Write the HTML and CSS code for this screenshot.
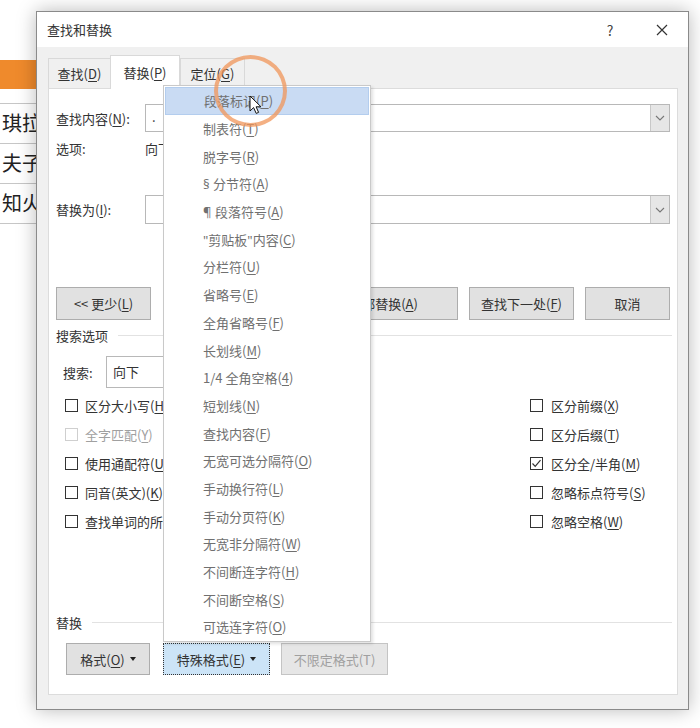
FILE: index.html
```html
<!DOCTYPE html>
<html lang="zh-CN">
<head>
    <meta charset="UTF-8">
    <title>查找和替换</title>
    <link rel="stylesheet" href="styles.css">
</head>
<body>
    <div class="doc">
        <div class="doc-bar"></div>
        <div class="doc-table">
            <div class="doc-row">琪拉</div>
            <div class="doc-row">夫子</div>
            <div class="doc-row">知火</div>
        </div>
    </div>

    <div class="dialog">
        <div class="titlebar">
            <span class="title">查找和替换</span>
            <span class="help">?</span>
            <svg class="close" width="12" height="12" viewBox="0 0 12 12">
                <path d="M1 1 L11 11 M11 1 L1 11" stroke="#333" stroke-width="1.2"/>
            </svg>
        </div>
        <div class="main">
            <div class="tabs">
                <div class="tab tab-find">查找(<u>D</u>)</div>
                <div class="tab tab-replace active">替换(<u>P</u>)</div>
                <div class="tab tab-goto">定位(<u>G</u>)</div>
            </div>
            <div class="panel">
                <div class="field-row find-row">
                    <span class="label">查找内容(<u>N</u>):</span>
                    <div class="combo">
                        <span class="combo-text">.</span>
                        <span class="combo-btn">
                            <svg width="10" height="6" viewBox="0 0 10 6"><polyline points="1,1 5,5 9,1" fill="none" stroke="#777" stroke-width="1.1"/></svg>
                        </span>
                    </div>
                </div>
                <div class="field-row opt-row">
                    <span class="label">选项:</span>
                    <span>向下, 区分全/半角</span>
                </div>
                <div class="field-row replace-row">
                    <span class="label">替换为(<u>I</u>):</span>
                    <div class="combo">
                        <span class="combo-text"></span>
                        <span class="combo-btn">
                            <svg width="10" height="6" viewBox="0 0 10 6"><polyline points="1,1 5,5 9,1" fill="none" stroke="#777" stroke-width="1.1"/></svg>
                        </span>
                    </div>
                </div>

                <div class="btn-row">
                    <div class="btn btn-less">&lt;&lt; 更少(<u>L</u>)</div>
                    <div class="btn-group">
                        <div class="btn btn-mid">替换(<u>R</u>)</div>
                        <div class="btn btn-all">全部替换(<u>A</u>)</div>
                        <div class="btn btn-wide">查找下一处(<u>F</u>)</div>
                        <div class="btn btn-cancel">取消</div>
                    </div>
                </div>

                <div class="group-title search-title">搜索选项</div>
                <div class="search-row">
                    <span class="search-label">搜索:</span>
                    <div class="select">向下</div>
                </div>

                <div class="checks">
                    <div class="check left"><span class="box"></span><span>区分大小写(<u>H</u>)</span></div>
                    <div class="check"><span class="box"></span><span>区分前缀(<u>X</u>)</span></div>
                    <div class="check left disabled"><span class="box"></span><span>全字匹配(<u>Y</u>)</span></div>
                    <div class="check"><span class="box"></span><span>区分后缀(<u>T</u>)</span></div>
                    <div class="check left"><span class="box"></span><span>使用通配符(<u>U</u>)</span></div>
                    <div class="check">
                        <span class="box">
                            <svg width="11" height="11" viewBox="0 0 11 11"><polyline points="1.5,5.5 4.2,8.3 9.5,2.2" fill="none" stroke="#333" stroke-width="1.2"/></svg>
                        </span><span>区分全/半角(<u>M</u>)</span>
                    </div>
                    <div class="check left"><span class="box"></span><span>同音(英文)(<u>K</u>)</span></div>
                    <div class="check"><span class="box"></span><span>忽略标点符号(<u>S</u>)</span></div>
                    <div class="check left"><span class="box"></span><span>查找单词的所有形式(英文)(<u>W</u>)</span></div>
                    <div class="check"><span class="box"></span><span>忽略空格(<u>W</u>)</span></div>
                </div>

                <div class="group-title replace-title">替换</div>
                <div class="bottom-btns">
                    <div class="btn btn-format">格式(<u>O</u>) <i class="caret"></i></div>
                    <div class="btn btn-special focused">特殊格式(<u>E</u>) <i class="caret"></i></div>
                    <div class="btn btn-noformat disabled">不限定格式(T)</div>
                </div>
            </div>
        </div>
    </div>

    <div class="menu">
        <div class="menu-item hover"><span>段落标记(<u>P</u>)</span></div>
        <div class="menu-item"><span>制表符(<u>T</u>)</span></div>
        <div class="menu-item"><span>脱字号(<u>R</u>)</span></div>
        <div class="menu-item"><span><span class="latin">§ </span>分节符(<u>A</u>)</span></div>
        <div class="menu-item"><span><span class="latin">¶ </span>段落符号(<u>A</u>)</span></div>
        <div class="menu-item"><span><span class="latin">"</span>剪贴板<span class="latin">"</span>内容(<u>C</u>)</span></div>
        <div class="menu-item"><span>分栏符(<u>U</u>)</span></div>
        <div class="menu-item"><span>省略号(<u>E</u>)</span></div>
        <div class="menu-item"><span>全角省略号(<u>F</u>)</span></div>
        <div class="menu-item"><span>长划线(<u>M</u>)</span></div>
        <div class="menu-item"><span>1/4 全角空格(<u>4</u>)</span></div>
        <div class="menu-item"><span>短划线(<u>N</u>)</span></div>
        <div class="menu-item"><span>查找内容(<u>F</u>)</span></div>
        <div class="menu-item"><span>无宽可选分隔符(<u>O</u>)</span></div>
        <div class="menu-item"><span>手动换行符(<u>L</u>)</span></div>
        <div class="menu-item"><span>手动分页符(<u>K</u>)</span></div>
        <div class="menu-item"><span>无宽非分隔符(<u>W</u>)</span></div>
        <div class="menu-item"><span>不间断连字符(<u>H</u>)</span></div>
        <div class="menu-item"><span>不间断空格(<u>S</u>)</span></div>
        <div class="menu-item"><span>可选连字符(<u>O</u>)</span></div>
    </div>

    <div class="click-ring"></div>
    <svg class="cursor" width="14" height="20" viewBox="0 0 14 20">
        <path d="M1 1 L1 16 L4.6 12.6 L7.2 18.4 L9.6 17.4 L7.1 11.8 L12 11.8 Z" fill="#fff" stroke="#111" stroke-width="1" stroke-linejoin="round"/>
    </svg>
</body>
</html>
```

FILE: styles.css
```css
* {
    box-sizing: border-box;
}
body {
    margin: 0;
    width: 700px;
    height: 728px;
    overflow: hidden;
    position: relative;
    background: #fff;
    font-family: "Noto Sans CJK SC", "Noto Sans", sans-serif;
    font-size: 13px;
    color: #333;
}
u {
    text-decoration-thickness: 1px;
    text-underline-offset: 2px;
}
.latin {
    font-family: "Noto Sans", sans-serif;
}

/* document behind the dialog */
.doc {
    padding-top: 60px;
    width: 120px;
}
.doc-bar {
    height: 29px;
    background: #ef8a2c;
}
.doc-table {
    margin-top: 14px;
    border-top: 1px solid #c6c6c6;
}
.doc-row {
    height: 40px;
    border-bottom: 1px solid #c6c6c6;
    font-size: 20px;
    line-height: 38px;
    padding-left: 2px;
    color: #222;
}

/* dialog window */
.dialog {
    position: absolute;
    left: 36px;
    top: 11px;
    width: 653px;
    height: 699px;
    border: 1px solid #8a8a8a;
    background: #f0f0f0;
    box-shadow: 0 0 18px rgba(0, 0, 0, 0.28);
    display: flex;
    flex-direction: column;
}
.titlebar {
    height: 35px;
    background: #fff;
    display: flex;
    align-items: center;
    padding-left: 10px;
}
.title {
    color: #333;
}
.help {
    margin-left: auto;
    width: 10px;
    margin-right: 41px;
    text-align: center;
    font-size: 14px;
    color: #444;
}
.close {
    margin-right: 20px;
}
.main {
    flex: 1;
    padding: 8px 10px 14px 11px;
    display: flex;
    flex-direction: column;
}
.tabs {
    height: 33px;
    display: flex;
    align-items: flex-end;
}
.tab {
    height: 30px;
    display: flex;
    align-items: center;
    justify-content: center;
    border: 1px solid #d9d9d9;
    border-bottom: none;
    border-right: none;
    background: #f0f0f0;
}
.tab-find { width: 62px; }
.tab-replace { width: 70px; }
.tab-goto { width: 65px; border-right: 1px solid #d9d9d9; }
.tab.active {
    height: 34px;
    margin-bottom: -1px;
    background: #fff;
    border-right: 1px solid #d9d9d9;
    position: relative;
}
.panel {
    height: 607px;
    background: #fff;
    border: 1px solid #dcdcdc;
    padding: 0 7px 0 7px;
    display: flex;
    flex-direction: column;
}

.field-row {
    display: flex;
    align-items: center;
}
.label {
    width: 89px;
    flex-shrink: 0;
}
.find-row {
    margin-top: 15px;
    height: 28px;
}
.opt-row {
    margin-top: 6px;
    height: 20px;
}
.replace-row {
    margin-top: 37px;
    height: 29px;
}
.combo {
    flex: 1;
    height: 100%;
    border: 1px solid #b8b8b8;
    display: flex;
}
.combo-text {
    flex: 1;
    padding-left: 6px;
    line-height: 24px;
}
.combo-btn {
    width: 19px;
    background: #e6e6e6;
    border-left: 1px solid #c8c8c8;
    display: flex;
    align-items: center;
    justify-content: center;
}

.btn {
    height: 33px;
    border: 1px solid #adadad;
    background: #e1e1e1;
    display: flex;
    align-items: center;
    justify-content: center;
    color: #333;
}
.btn-row {
    margin-top: 63px;
    display: flex;
}
.btn-less { width: 95px; }
.btn-group {
    margin-left: auto;
    display: flex;
    gap: 11px;
}
.btn-mid { width: 95px; }
.btn-all { width: 149px; }
.btn-wide { width: 105px; }
.btn-cancel { width: 85px; }

.group-title {
    height: 16px;
    display: flex;
    align-items: center;
    color: #333;
}
.group-title::after {
    content: "";
    flex: 1;
    border-top: 1px solid #e2e2e2;
    margin-left: 10px;
    margin-right: -2px;
}
.search-title {
    margin-top: 7px;
}
.search-row {
    margin-top: 13px;
    height: 32px;
    display: flex;
    align-items: center;
    padding-left: 7px;
}
.search-label {
    width: 43px;
}
.select {
    width: 140px;
    height: 32px;
    border: 1px solid #b8b8b8;
    padding-left: 6px;
    line-height: 30px;
}

.checks {
    margin-top: 3px;
    display: grid;
    grid-template-columns: 474px auto;
}
.check {
    height: 29px;
    display: flex;
    align-items: center;
    gap: 8px;
}
.check.left {
    padding-left: 9px;
    gap: 7px;
}
.box {
    width: 13px;
    height: 13px;
    border: 1px solid #333;
    background: #fff;
    display: flex;
    align-items: center;
    justify-content: center;
}
.check.disabled {
    color: #a0a0a0;
}
.check.disabled .box {
    border-color: #cfcfcf;
}

.replace-title {
    margin-top: 78px;
}
.bottom-btns {
    margin-top: 13px;
    display: flex;
    padding-left: 10px;
}
.btn-format { width: 84px; height: 32px; margin-right: 13px; }
.btn-special { width: 107px; height: 32px; margin-right: 11px; }
.btn-noformat { width: 107px; height: 32px; }
.btn.focused {
    background: #cce4f7;
    border: 1px dotted #333;
}
.btn.disabled {
    color: #a0a0a0;
    border-color: #c4c4c4;
    background: #e6e6e6;
}
.caret {
    display: inline-block;
    margin-left: 5px;
    border-left: 3px solid transparent;
    border-right: 3px solid transparent;
    border-top: 4px solid #222;
}

/* special format dropdown */
.menu {
    position: absolute;
    left: 163px;
    top: 85px;
    width: 208px;
    height: 557px;
    background: #fff;
    border: 1px solid #c9c9c9;
    box-shadow: 2px 2px 3px rgba(0, 0, 0, 0.12);
    padding: 1px 1px;
}
.menu-item {
    height: 27.7px;
    padding-left: 38px;
    display: flex;
    align-items: center;
    color: #707070;
}
.menu-item.hover {
    background: #c9dbf3;
    border: 1px solid #b3cdee;
}

.click-ring {
    position: absolute;
    left: 214px;
    top: 55px;
    width: 73px;
    height: 72px;
    border-radius: 50%;
    border: 4px solid rgba(240, 150, 90, 0.75);
}
.cursor {
    position: absolute;
    left: 249px;
    top: 95px;
}
```
